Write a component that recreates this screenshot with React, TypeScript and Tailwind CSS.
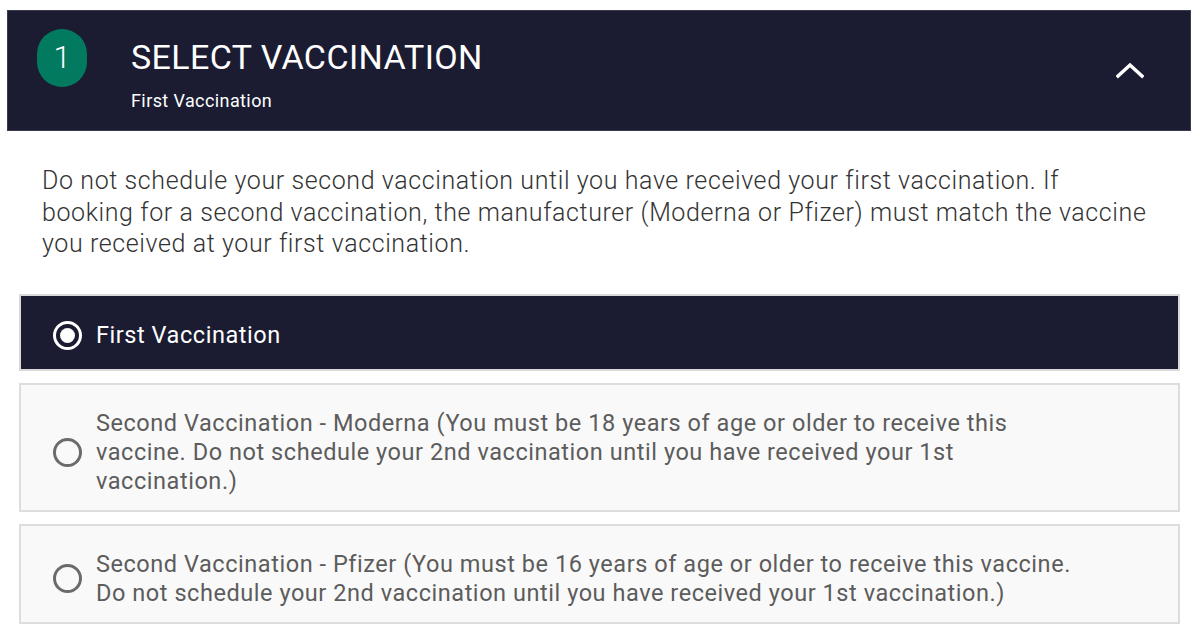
import React, { useState } from 'react';

const options = [
  { id: 'first', label: 'First Vaccination' },
  {
    id: 'moderna',
    label:
      'Second Vaccination - Moderna (You must be 18 years of age or older to receive this vaccine. Do not schedule your 2nd vaccination until you have received your 1st vaccination.)',
  },
  {
    id: 'pfizer',
    label:
      'Second Vaccination - Pfizer (You must be 16 years of age or older to receive this vaccine. Do not schedule your 2nd vaccination until you have received your 1st vaccination.)',
  },
];

function Radio({ checked }: { checked: boolean }) {
  if (checked) {
    return (
      <span className="flex h-[29px] w-[29px] shrink-0 items-center justify-center rounded-full border-[3px] border-white">
        <span className="h-[15px] w-[15px] rounded-full bg-white" />
      </span>
    );
  }
  return <span className="h-[29px] w-[29px] shrink-0 rounded-full border-[3px] border-[#6b6b6b]" />;
}

export default function App() {
  const [selected, setSelected] = useState('first');

  return (
    <div className="min-h-screen bg-white pt-[10px] font-['Roboto',sans-serif]">
      {/* Step header */}
      <div className="ml-[7px] mr-[9px] flex h-[121px] items-start border border-[#3a3b4f] bg-[#1b1c32] pl-[29px] pr-[46px] pt-[17px]">
        <div className="mt-[1px] flex h-[58px] w-[50px] items-center justify-center rounded-full bg-[#027a60] text-[31px] font-light text-white">
          1
        </div>
        <div className="ml-[44px] flex flex-col">
          <h1 className="text-[34px] leading-[58px] font-normal tracking-[0.4px] text-white">SELECT VACCINATION</h1>
          <p className="mt-[3px] text-[18px] leading-[24px] tracking-[0.4px] text-white">First Vaccination</p>
        </div>
        <svg className="ml-auto mt-[33px]" width="28" height="18" viewBox="0 0 28 18" fill="none">
          <path d="M2 15 L14 4 L26 15" stroke="white" strokeWidth="3.5" strokeLinecap="square" />
        </svg>
      </div>

      {/* Notice */}
      <p className="ml-[42px] mr-[45px] mt-[34px] text-[25px] leading-[31.5px] font-light tracking-[0.6px] text-[#333333]">
        Do not schedule your second vaccination until you have received your first vaccination. If booking for a second
        vaccination, the manufacturer (Moderna or Pfizer) must match the vaccine you received at your first vaccination.
      </p>

      {/* Options */}
      <div className="ml-[19px] mr-[20px] mt-[34px] flex flex-col gap-[12px]">
        {options.map((o) => {
          const active = selected === o.id;
          return (
            <button
              key={o.id}
              onClick={() => setSelected(o.id)}
              className={
                active
                  ? 'flex h-[77px] items-center gap-[14px] border-2 border-[#d9d9d9] bg-[#1b1c32] pt-[7px] pl-[32px] pr-[95px] text-left'
                  : 'flex items-center gap-[14px] border-2 border-[#dddddd] bg-[#f9f9f9] pt-[24px] pb-[14px] pl-[32px] pr-[95px] text-left'
              }
            >
              <Radio checked={active} />
              <span
                className={
                  active
                    ? 'text-[23.5px] leading-[29px] tracking-[0.55px] text-white'
                    : 'text-[23.5px] leading-[29px] tracking-[0.55px] text-[#5c5c5c]'
                }
              >
                {o.label}
              </span>
            </button>
          );
        })}
      </div>
    </div>
  );
}
